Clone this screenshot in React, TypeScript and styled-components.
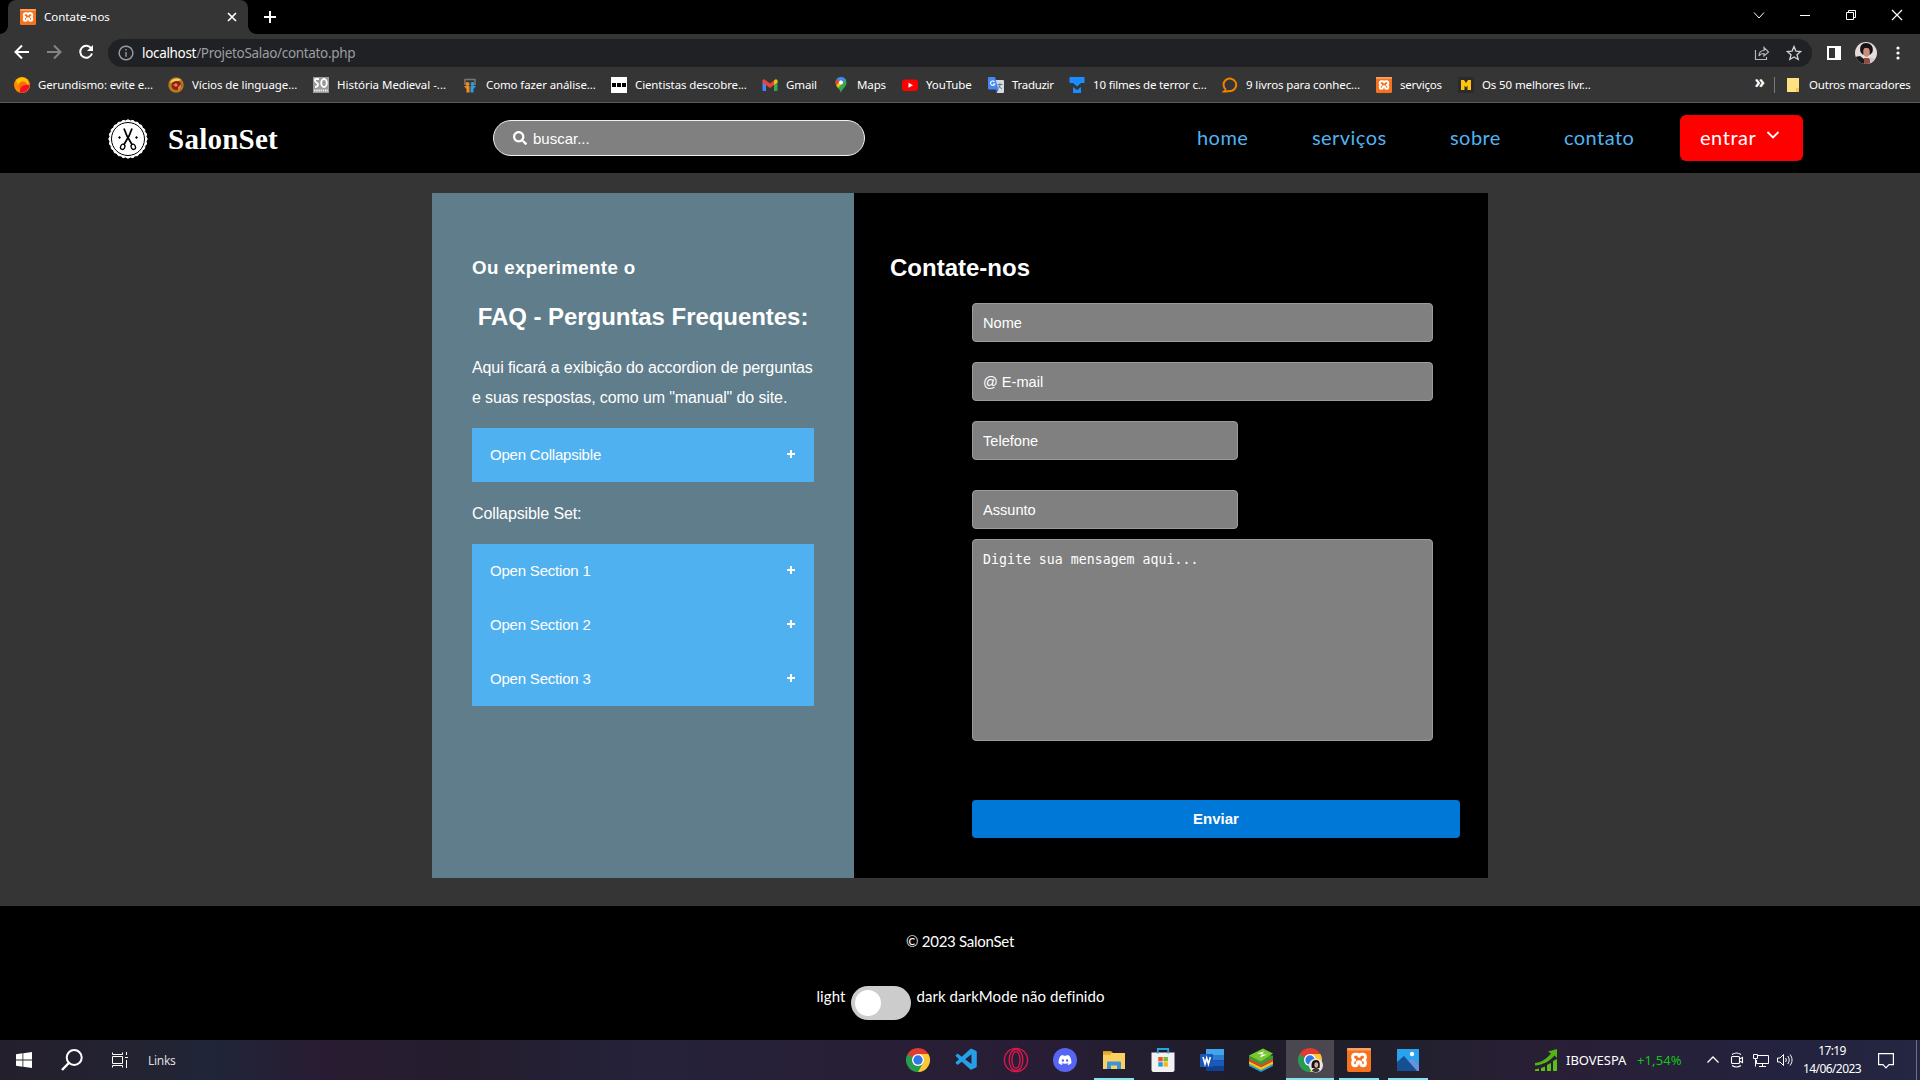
import React from "react";
import styled, { createGlobalStyle, css } from "styled-components";
import { FaDiscord, FaSearch } from "react-icons/fa";
import { VscVscode } from "react-icons/vsc";

const ui = `"Noto Sans", "Open Sans", sans-serif`;
const arial = `"Liberation Sans", Arial, sans-serif`;
const site = `Lato, "Open Sans", sans-serif`;

const GlobalStyle = createGlobalStyle`
  * { box-sizing: border-box; }
  body { margin: 0; background: #353535; overflow: hidden; }
  h1, h2, h3, p { margin: 0; }
  svg { display: block; flex: none; }
`;

const Screen = styled.div`
  width: 1920px;
  height: 1080px;
  display: flex;
  flex-direction: column;
  overflow: hidden;
  background: #353535;
  color: #fff;
  font-family: ${ui};
`;

/* ---------- browser chrome ---------- */

const TabStrip = styled.div`
  height: 34px;
  flex: none;
  background: #000;
  display: flex;
  align-items: center;
  padding-left: 8px;
`;
const Tab = styled.div`
  position: relative;
  width: 240px;
  height: 34px;
  border-radius: 8px 8px 0 0;
  background: #353535;
  display: flex;
  align-items: center;
  padding: 0 9px 0 12px;
  &::before,
  &::after {
    content: "";
    position: absolute;
    bottom: 0;
    width: 8px;
    height: 8px;
  }
  &::before {
    left: -8px;
    background: radial-gradient(circle at 0 0, #000 7.5px, #353535 8px);
  }
  &::after {
    right: -8px;
    background: radial-gradient(circle at 100% 0, #000 7.5px, #353535 8px);
  }
`;
const TabTitle = styled.span`
  margin-left: 8px;
  padding-bottom: 2px;
  flex: 1;
  font-size: 11.5px;
  letter-spacing: 0;
`;
const NewTab = styled.div`
  margin-left: 16px;
  flex: 1;
`;
const WindowButtons = styled.div`
  display: flex;
  align-items: center;
  gap: 30px;
  padding: 0 15px 5px 0;
`;

const Toolbar = styled.div`
  height: 34px;
  flex: none;
  display: flex;
  align-items: center;
  padding: 2px 10px 0 14px;
`;
const NavIcons = styled.div`
  display: flex;
  gap: 16px;
  width: 94px;
`;
const AddressBar = styled.div`
  width: 1704px;
  height: 28px;
  margin-top: 2px;
  border-radius: 14px;
  background: #202124;
  display: flex;
  align-items: center;
  padding: 0 10px 0 10px;
`;
const Url = styled.div`
  flex: 1;
  margin-left: 8px;
  padding-bottom: 1px;
  font-size: 13.5px;
  letter-spacing: -0.32px;
  color: #9a9da1;
  b {
    font-weight: 400;
    color: #fff;
  }
`;
const BarActions = styled.div`
  display: flex;
  gap: 16px;
`;
const ToolActions = styled.div`
  margin: 2px 0 0 14px;
  display: flex;
  align-items: center;
  gap: 13px;
  svg:last-child { margin-left: 3px; }
`;

const Bookmarks = styled.div`
  height: 35px;
  flex: none;
  display: flex;
  align-items: center;
  padding: 0 0 1px 14px;
  border-bottom: 1px solid #5b5c5e;
`;
const Bookmark = styled.div`
  display: flex;
  align-items: center;
  gap: 8px;
  margin-right: 16px;
`;
const BookmarkText = styled.span<{ $w: number; $ls?: number }>`
  width: ${(p) => p.$w}px;
  padding-bottom: 1px;
  white-space: nowrap;
  font-size: 11.5px;
  letter-spacing: ${(p) => p.$ls ?? -0.12}px;
`;
const More = styled.span`
  margin: 0 9px 0 auto;
  font-size: 17px;
  font-weight: 700;
  line-height: 16px;
  padding-bottom: 5px;
`;
const Separator = styled.span`
  width: 1px;
  height: 16px;
  background: #77797b;
  margin-right: 11px;
`;

/* ---------- page header ---------- */

const Header = styled.header`
  height: 70px;
  flex: none;
  background: #000;
  display: flex;
  align-items: center;
  padding: 0 117px 0 108px;
`;
const Brand = styled.div`
  display: flex;
  align-items: center;
  gap: 20px;
  width: 385px;
  padding-top: 1px;
  font-family: "Liberation Serif", "Times New Roman", serif;
  font-size: 29px;
  letter-spacing: 0.25px;
  font-weight: 700;
  line-height: 34px;
`;
const Search = styled.div`
  width: 372px;
  height: 36px;
  border: 1px solid #f0f0f0;
  border-radius: 18px;
  background: #808080;
  display: flex;
  align-items: center;
  gap: 6px;
  padding-left: 19px;
  font-family: ${arial};
  font-size: 15px;
`;
const Menu = styled.nav`
  flex: 1;
  display: flex;
  align-items: center;
  justify-content: flex-end;
  gap: 64px;
  padding: 0 45px 2px 0;
`;
const MenuLink = styled.a<{ $w: number }>`
  width: ${(p) => p.$w}px;
  white-space: nowrap;
  font-family: ${site};
  font-size: 20px;
  line-height: 26px;
  letter-spacing: 0.45px;
  color: #52b3f1;
`;
const Enter = styled.button`
  width: 123px;
  height: 46px;
  border: 0;
  border-radius: 6px;
  background: #f00;
  color: #fff;
  display: flex;
  align-items: center;
  gap: 10px;
  padding: 0 0 2px 20px;
  font-family: ${site};
  font-size: 20px;
  letter-spacing: 0.55px;
  svg { margin-bottom: 4px; }
`;

/* ---------- contact panel ---------- */

const Main = styled.main`
  flex: none;
  height: 733px;
  padding: 20px 432px 0;
`;
const Panel = styled.section`
  width: 1056px;
  height: 685px;
  display: flex;
`;
const Faq = styled.div`
  width: 422px;
  padding: 60px 40px 0;
  background: #607d8b;
  font-family: ${arial};
`;
const FaqLead = styled.h3`
  font-size: 18.72px;
  line-height: 30px;
  letter-spacing: 0.34px;
`;
const FaqTitle = styled.h2`
  margin-top: 19px;
  font-size: 24px;
  line-height: 30px;
  letter-spacing: -0.05px;
  text-align: center;
  white-space: nowrap;
`;
const FaqText = styled.p<{ $top: number }>`
  margin-top: ${(p) => p.$top}px;
  font-size: 16px;
  line-height: 30px;
  letter-spacing: -0.11px;
  white-space: nowrap;
`;
const Accordion = styled.div<{ $top: number }>`
  margin-top: ${(p) => p.$top}px;
  background: #50b1f0;
`;
const AccordionRow = styled.button`
  width: 100%;
  height: 54px;
  border: 0;
  padding: 0 19px 2px 18px;
  background: transparent;
  color: #fff;
  display: flex;
  align-items: center;
  justify-content: space-between;
  font-family: ${arial};
  font-size: 15px;
  letter-spacing: -0.2px;
`;

const Contact = styled.div`
  width: 634px;
  padding: 60px 28px 0 36px;
  background: #000;
  font-family: ${arial};
`;
const ContactTitle = styled.h2`
  font-size: 24px;
  line-height: 30px;
`;
const Form = styled.form`
  margin-top: 20px;
  padding-left: 82px;
  display: flex;
  flex-direction: column;
`;
const fieldStyle = css`
  display: block;
  border: 1px solid #9c9c9c;
  border-radius: 4px;
  background: #808080;
  color: #fff;
  outline: none;
  &::placeholder {
    color: #fff;
    opacity: 1;
  }
`;
const Field = styled.input<{ $w: number; $gap: number }>`
  ${fieldStyle}
  width: ${(p) => p.$w}px;
  height: 39px;
  margin: 0 0 ${(p) => p.$gap}px;
  padding: 0 10px;
  font: 14.6px ${arial};
`;
const Message = styled.textarea`
  ${fieldStyle}
  width: 461px;
  height: 202px;
  margin: 0 0 59px;
  padding: 12px 10px;
  resize: none;
  font: 13.25px/16px "DejaVu Sans Mono", monospace;
`;
const Submit = styled.button`
  width: 488px;
  height: 38px;
  border: 0;
  border-radius: 4px;
  padding: 0 0 2px;
  background: #0078d7;
  color: #fff;
  font: 700 15px ${arial};
`;

/* ---------- page footer ---------- */

const Footer = styled.footer`
  height: 134px;
  flex: none;
  background: #000;
  display: flex;
  flex-direction: column;
  align-items: center;
  padding-top: 25px;
  font-family: ${site};
  font-size: 15px;
  line-height: 20px;
`;
const Copyright = styled.p`
  letter-spacing: -0.27px;
`;
const ThemeRow = styled.div`
  margin-top: 35px;
  display: flex;
  gap: 6px;
`;
const ThemeText = styled.span<{ $w: number }>`
  width: ${(p) => p.$w}px;
  white-space: nowrap;
  letter-spacing: 0.07px;
`;
const Toggle = styled.span`
  width: 60px;
  height: 34px;
  padding: 4px;
  border-radius: 17px;
  background: #ccc;
  &::before {
    content: "";
    display: block;
    width: 26px;
    height: 26px;
    border-radius: 50%;
    background: #fff;
  }
`;

/* ---------- desktop taskbar ---------- */

const Taskbar = styled.div`
  height: 40px;
  flex: none;
  display: flex;
  align-items: center;
  background: linear-gradient(90deg, #241f2d 0, #232331 7%, #202538 11%, #291c32 17%, #241d2e 24%, #25223a 34%, #281e35 48%, #271e35 55%, #1e1d29 66%, #22202f 74%, #291f35 80%, #272039 86%, #232340 94%, #252642 100%);
`;
const StartGroup = styled.div`
  width: 894px;
  padding-left: 16px;
  display: flex;
  align-items: center;
  font-size: 12px;
  letter-spacing: -0.3px;
  color: #ddd;
`;
const Slot = styled.span<{ $left: number }>`
  margin-left: ${(p) => p.$left}px;
`;
const Apps = styled.div`
  display: flex;
  gap: 1px;
`;
const AppButton = styled.div<{ $open?: boolean; $active?: boolean }>`
  width: 48px;
  height: 40px;
  display: flex;
  flex-direction: column;
  align-items: center;
  justify-content: center;
  position: relative;
  background: ${(p) => (p.$active ? "#4b4751" : "transparent")};
  &::after {
    content: "";
    display: ${(p) => (p.$open || p.$active ? "block" : "none")};
    position: absolute;
    bottom: 0;
    width: ${(p) => (p.$active ? 48 : 40)}px;
    height: 2px;
    background: #86e2ee;
  }
`;
const Tray = styled.div`
  margin-left: 103px;
  flex: 1;
  display: flex;
  align-items: center;
`;
const Stock = styled.span`
  margin-left: 9px;
  width: 71px;
  font-size: 13px;
  letter-spacing: -0.02px;
`;
const Change = styled.span`
  width: 68px;
  font-size: 13px;
  letter-spacing: 0.1px;
  color: #14c414;
`;
const TrayIcons = styled.div`
  width: 88px;
  display: flex;
  justify-content: space-between;
`;
const Clock = styled.div`
  width: 78px;
  text-align: center;
  font-size: 12px;
  line-height: 18px;
  letter-spacing: -0.6px;
`;
const Edge = styled.span`
  margin: 0 3px 0 auto;
  width: 1px;
  height: 40px;
  background: #6f7085;
`;

/* ---------- drawings ---------- */

const Xampp = ({ s }: { s: number }) => (
  <svg width={s} height={s} viewBox="0 0 24 24">
    <rect width="24" height="24" rx="2" fill="#f5731f" />
    <rect width="24" height="2.5" rx="1" fill="#f9a263" />
    <path
      d="M8 6.200h2.200c1 0 1.800.8 1.800 1.800s.8-1.800 1.800-1.800H16a2.300 2.300 0 0 1 2.300 2.300v1.200c0 1.200-.9 2.300-2 2.300 1.100 0 2 1.100 2 2.300v1.200a2.300 2.300 0 0 1-2.300 2.300 2.300 2.300 0 0 1-2.300-2.300c0-1.200-.7-1.800-1.700-1.800s-1.700.6-1.700 1.800a2.300 2.300 0 0 1-2.300 2.300 2.300 2.300 0 0 1-2.300-2.300v-1.200c0-1.200.9-2.300 2-2.300-1.100 0-2-1.100-2-2.300V8.500A2.300 2.300 0 0 1 8 6.200z"
      fill="none"
      stroke="#fff"
      strokeWidth="3"
      strokeLinejoin="round"
    />
  </svg>
);

const ChromeLogo = ({ face }: { face?: boolean }) => (
  <svg width="26" height="26" viewBox="0 0 26 26">
    <path d="M13 13 2.600 7A12 12 0 0 1 23.400 7z" fill="#e33b2e" />
    <path d="M13 13 23.400 7A12 12 0 0 1 13 25z" fill="#fcc934" />
    <path d="M13 13v12A12 12 0 0 1 2.600 7z" fill="#269d4e" />
    <path d="M13 7h10.400l-5.200 9z" fill="#fcc934" />
    <path d="M7.800 16 2.600 7 13 7z" fill="#e33b2e" />
    <path d="M18.200 16 13 25 7.800 16z" fill="#269d4e" />
    <path d="M2.600 7 7.800 16 9 11z" fill="#269d4e" />
    <circle cx="13" cy="13" r="6" fill="#fff" />
    <circle cx="13" cy="13" r="4.700" fill="#2f78ea" />
    {face && (
      <g>
        <circle cx="19" cy="18.500" r="7" fill="#e9e6e4" />
        <path d="M14.800 21c-1-5 .5-8 4.200-8s4.200 3.500 3.500 8z" fill="#17120f" />
        <ellipse cx="19.300" cy="18" rx="1.900" ry="2.800" fill="#e0ad9a" />
        <path d="M15 23.500c1-2 3-2.500 4-2.500s3 .5 3.500 2.500c-2 2-5.500 2-7.500 0z" fill="#3a3335" />
      </g>
    )}
  </svg>
);

const Logo = () => {
  const teeth = Array.from({ length: 48 }, (_, i) => {
    const a = (i * Math.PI) / 24;
    const r = i % 2 ? 18.2 : 19.3;
    return `${20 + r * Math.cos(a)},${20 + r * Math.sin(a)}`;
  }).join(" ");
  return (
    <svg width="40" height="40" viewBox="0 0 40 40">
      <polygon points={teeth} fill="#fff" stroke="#fff" strokeLinejoin="round" />
      <circle cx="20" cy="20" r="16.500" fill="none" stroke="#000" strokeWidth="1" />
      <g fill="none" stroke="#000" strokeWidth="1.300">
        <path d="M16 9.500 19 17l5 8.500M24 9.500 21 17l-5 8.500" strokeWidth="1.700" />
        <ellipse cx="14.700" cy="27.800" rx="2.100" ry="2.700" transform="rotate(25 14.700 27.800)" />
        <ellipse cx="25.300" cy="27.800" rx="2.100" ry="2.700" transform="rotate(-25 25.300 27.800)" />
      </g>
      <path d="M11.500 17l1.500 1.500-1.500 1.500-1.500-1.500zM28.500 17l1.500 1.500-1.500 1.500-1.500-1.500z" />
    </svg>
  );
};

const Stroke = ({
  d,
  w = 16,
  h,
  sw = 1,
  c = "#fff",
}: {
  d: string;
  w?: number;
  h?: number;
  sw?: number;
  c?: string;
}) => (
  <svg width={w} height={h ?? w} viewBox={`0 0 ${w} ${h ?? w}`} fill="none" stroke={c} strokeWidth={sw}>
    <path d={d} />
  </svg>
);

const Avatar = () => (
  <svg width="22" height="22" viewBox="0 0 22 22">
    <defs>
      <clipPath id="avatar">
        <circle cx="11" cy="11" r="11" />
      </clipPath>
    </defs>
    <g clipPath="url(#avatar)">
      <path fill="#e4dcda" d="M0 0h22v22H0z" />
      <path d="M5.500 10C4 4 7 1 11 1s8 3 6.500 9l-2 2.500h-8z" fill="#181113" />
      <ellipse cx="11.500" cy="10" rx="3.300" ry="4.700" fill="#c98d7d" />
      <path d="M7.500 8c1-3 6-3 8 0V5h-8z" fill="#181113" />
      <path d="M0 15l5-1 4 3v5H0z" fill="#1c1a1d" />
      <path d="M9 16h5l3 6H9z" fill="#8b4f43" />
      <path d="M15 15l5 2v5h-5z" fill="#cfcacb" />
    </g>
  </svg>
);

const b = (children: React.ReactNode) => (
  <svg width="16" height="16" viewBox="0 0 16 16">
    {children}
  </svg>
);

const bookmarks: { text: string; w: number; ls?: number; icon: React.ReactNode }[] = [
  {
    text: "Gerundismo: evite e...",
    w: 114,
    icon: b(
      <>
        <circle cx="8" cy="8" r="8" fill="#ff8a00" />
        <path d="M2 4a7 7 0 0 1 12 0l1 5-9 1z" fill="#ffc400" />
        <circle cx="9" cy="9" r="4.500" fill="#ff6a00" />
        <path d="M15.500 8A8 8 0 0 1 6 15.500C5 11 9 7 15.500 8z" fill="#f4102c" />
      </>
    ),
  },
  {
    text: "Vícios de linguage...",
    w: 105,
    ls: -0.08,
    icon: b(
      <>
        <circle cx="8" cy="8" r="7.700" fill="#b57a1e" />
        <path d="M2 6a7 7 0 0 1 11-3L7 5z" fill="#f4cf62" />
        <ellipse cx="8.500" cy="8.500" rx="5" ry="4.500" fill="#8d1f14" />
        <path d="M5 8l3-2 2 2-2 2zM10 10l3-3v4l-3 3z" fill="#e0803a" />
      </>
    ),
  },
  {
    text: "História Medieval -...",
    w: 109,
    ls: -0.03,
    icon: b(
      <>
        <path fill="#9b9b9b" d="M0 0h16v16H0z" />
        <path d="M6 2H3C1 2 2 5 4 6s1 4-2 4" stroke="#fff" strokeWidth="1.800" fill="none" />
        <ellipse cx="11" cy="6" rx="2.800" ry="4" stroke="#fff" strokeWidth="1.800" fill="none" />
        <path d="M1 13.500h14" stroke="#eee" strokeWidth="2" strokeDasharray="1.500 .7" />
      </>
    ),
  },
  {
    text: "Como fazer análise...",
    w: 109,
    icon: b(
      <>
        <path d="M3 8V2.500h10V8" stroke="#777" strokeWidth="1.500" fill="none" />
        <circle cx="5.500" cy="7" r="2" fill="#f38b1e" />
        <circle cx="10.500" cy="7" r="2" fill="#2a9fd8" />
        <path d="M2 9h5.500v6.500H4.500V12z" fill="#f38b1e" />
        <path d="M8.500 9H14l-2.500 3v3.500h-3z" fill="#2a9fd8" />
      </>
    ),
  },
  {
    text: "Cientistas descobre...",
    w: 111,
    icon: b(
      <>
        <path fill="#fff" d="M0 0h16v16H0z" />
        <path d="M1 6h4v4H1zM6 6h4v4H6zM11 6h4v4h-4z" />
      </>
    ),
  },
  {
    text: "Gmail",
    w: 31,
    icon: b(
      <>
        <path d="M.5 3.500 4 6v8H1.500a1 1 0 0 1-1-1z" fill="#4285f4" />
        <path d="M15.500 3.500 12 6v8h2.500a1 1 0 0 0 1-1z" fill="#34a853" />
        <path d="M12 3.500 14 2l1.500 1.500v2L12 8z" fill="#fbbc04" />
        <path d="M.5 3.500 2 2l6 4.500L12 3.500V8l-4 3L.5 5.500z" fill="#ea4335" />
      </>
    ),
  },
  {
    text: "Maps",
    w: 29,
    icon: b(
      <>
        <path d="M8 16C7.300 12 2.500 10 2.500 5.500a5.500 5.500 0 0 1 11 0C13.500 10 8.700 12 8 16z" fill="#34a853" />
        <path d="M3.300 8.300A5.500 5.500 0 0 1 3.900 2L8 5.500z" fill="#ea4335" />
        <path d="M3.900 2A5.500 5.500 0 0 1 13 3L8 6z" fill="#4285f4" />
        <path d="M3.300 8.300 8 3l1.500 3-4.500 5z" fill="#fbbc04" />
        <circle cx="8" cy="5.500" r="2" fill="#fff" />
      </>
    ),
  },
  {
    text: "YouTube",
    w: 46,
    icon: b(
      <>
        <rect y="2.500" width="16" height="11.500" rx="3" fill="#f00" />
        <path d="M6.500 5.700v5L11 8.200z" fill="#fff" />
      </>
    ),
  },
  {
    text: "Traduzir",
    w: 41,
    ls: -0.3,
    icon: b(
      <>
        <path fill="#d6dbe2" d="M6 3h9a1 1 0 0 1 1 1v11a1 1 0 0 1-1 1H9z" />
        <path d="M9.500 7.500h5M12 6v1.500c0 2-1 3.500-2 4M10.500 9l3.500 3" stroke="#607d8b" fill="none" />
        <path fill="#4688f1" d="M1 0h6l3.500 12.500H1a1 1 0 0 1-1-1V1a1 1 0 0 1 1-1z" />
        <path d="M6.500 4.800A2.200 2.200 0 1 0 6.800 7H5" stroke="#fff" strokeWidth="1.100" fill="none" />
        <path fill="#3a54b4" d="M7 12.500h3.500L8.500 16z" />
      </>
    ),
  },
  {
    text: "10 filmes de terror c...",
    w: 113,
    ls: -0.17,
    icon: b(<path d="M.5 0h15v6H12l-4 3.500L4 6H.5zM4 10l4 3 4-3v6H4z" fill="#1a8cff" />),
  },
  {
    text: "9 livros para conhec...",
    w: 114,
    icon: b(<path d="M4 12.800A6.300 6.300 0 1 1 9 14c-2-.3-4 .6-7 .6L4 12.800" stroke="#f08000" strokeWidth="2" fill="none" />),
  },
  { text: "serviços", w: 42, ls: -0.22, icon: <Xampp s={16} /> },
  {
    text: "Os 50 melhores livr...",
    w: 109,
    icon: b(
      <>
        <path fill="#2b2b2b" d="M0 0h16v16H0z" />
        <path d="M3 3h3l2 3 2-3h3v10h-3.500V8.500L8 10.500 6.500 8.500V13H3z" fill="#ffc20e" />
      </>
    ),
  },
];

const sections = ["Open Section 1", "Open Section 2", "Open Section 3"];

const Plus = () => <Stroke w={8} sw={2} d="M4 0v8M0 4h8" />;

const apps: { open?: boolean; active?: boolean; icon: React.ReactNode }[] = [
  { icon: <ChromeLogo /> },
  { icon: <VscVscode size={26} color="#25a0e8" /> },
  {
    icon: (
      <svg width="26" height="26" viewBox="0 0 26 26" fill="none" stroke="#d9184c" strokeWidth="1.400">
        <circle cx="13" cy="13" r="11.600" />
        <ellipse cx="13" cy="13" rx="6.800" ry="10.700" />
        <ellipse cx="13" cy="13" rx="4" ry="8.500" />
      </svg>
    ),
  },
  {
    icon: (
      <svg width="24" height="24" viewBox="0 0 24 24">
        <circle cx="12" cy="12" r="12" fill="#5865f2" />
        <FaDiscord x={5} y={5} size={14} color="#fff" />
      </svg>
    ),
  },
  {
    open: true,
    icon: (
      <svg width="24" height="24" viewBox="0 0 24 24">
        <path d="M1 3h8l2 2H1z" fill="#d9981c" />
        <path d="M1 5h22v16H1z" fill="#fbd062" />
        <path d="M1 4.500h9L8.500 7H1z" fill="#eab038" />
        <path d="M5 21v-6.500a1 1 0 0 1 1-1h12a1 1 0 0 1 1 1V21h-4v-3.500H9V21z" fill="#3a94d8" />
      </svg>
    ),
  },
  {
    icon: (
      <svg width="24" height="26" viewBox="0 0 24 26">
        <path d="M.5 5.500h23V23a2 2 0 0 1-2 2h-19a2 2 0 0 1-2-2z" fill="#f1f1f1" />
        <path d="M6.800 6.500V2h10.400v4.500" fill="none" stroke="#23a5e0" strokeWidth="1.800" />
        <path d="M7.300 10h4.400v4.400H7.300z" fill="#f04e23" />
        <path d="M12.500 10h4.400v4.400h-4.400z" fill="#7db92c" />
        <path d="M7.300 15.200h4.400v4.400H7.300z" fill="#189fdc" />
        <path d="M12.500 15.200h4.400v4.400h-4.400z" fill="#fab515" />
      </svg>
    ),
  },
  {
    icon: (
      <svg width="24" height="24" viewBox="0 0 24 24">
        <path d="M6 1h18v6H6z" fill="#41a5ee" />
        <path d="M6 7h18v5.500H6z" fill="#2b7cd3" />
        <path d="M6 12.500h18V18H6z" fill="#185abd" />
        <path d="M6 18h18v5H6z" fill="#123f8c" />
        <path d="M0 6h13v13H0z" fill="#1a56b8" />
        <path d="M3 9l2 7 1.700-6 1.700 6L10.300 9" fill="none" stroke="#fff" strokeWidth="1.600" />
      </svg>
    ),
  },
  {
    icon: (
      <svg width="24" height="24" viewBox="0 0 24 24">
        <path d="M0 16l12 5 12-5v2l-12 6-12-6z" fill="#1f9bd7" />
        <path d="M0 13l12 6 12-6v3l-12 6-12-6z" fill="#f4c413" />
        <path d="M0 10l12 6 12-6v3l-12 6-12-6z" fill="#e8402e" />
        <path d="M0 7.500v3L12 17l12-6.500v-3z" fill="#3f9b2f" />
        <path d="M0 7.500 14 .5l10 5-12 8z" fill="#78c831" />
        <path d="M8 5.500l7-2-2 3h5l-7 3 2-3.500z" fill="#fff" />
      </svg>
    ),
  },
  { active: true, icon: <ChromeLogo face /> },
  { open: true, icon: <Xampp s={24} /> },
  {
    open: true,
    icon: (
      <svg width="22" height="22" viewBox="0 0 22 22">
        <path fill="#2aa3ef" d="M0 0h22v22H0z" />
        <path d="M10 14l5-4.500 7 7V22H10z" fill="#6f8fd8" />
        <path d="M0 13l7-6 13 15H0z" fill="#154f94" />
        <circle cx="15" cy="5" r="2.200" fill="#fff" />
      </svg>
    ),
  },
];

export default function App() {
  return (
    <Screen>
      <GlobalStyle />
      <TabStrip>
        <Tab>
          <Xampp s={16} />
          <TabTitle>Contate-nos</TabTitle>
          <Stroke w={14} sw={1.7} d="M3 3l8 8M11 3l-8 8" />
        </Tab>
        <NewTab>
          <Stroke w={12} sw={2} d="M6 0v12M0 6h12" />
        </NewTab>
        <WindowButtons>
          <Stroke d="M3 5.500l5 5.500 5-5.500" />
          <Stroke d="M3 8.500h10" />
          <Stroke d="M3.500 5.500h7v7h-7zM5.500 5.500v-2h7v7h-2" />
          <Stroke d="M3 3l10 10M13 3L3 13" sw={1.2} />
        </WindowButtons>
      </TabStrip>
      <Toolbar>
        <NavIcons>
          <Stroke sw={2} d="M15 8H2M8 1.500L1.500 8 8 14.500" />
          <Stroke sw={2} c="#858585" d="M1 8h13M8 1.500L14.500 8 8 14.500" />
          <svg width="16" height="16" viewBox="0 0 16 16">
            <path d="M13.300 4.500A6 6 0 1 0 14 9.500" fill="none" stroke="#fff" strokeWidth="2" />
            <path d="M15 1v6H9z" fill="#fff" />
          </svg>
        </NavIcons>
        <AddressBar>
          <Stroke c="#9a9da1" sw={1.4} d="M8 1.200a6.800 6.800 0 1 0 .01 0M8 7v4.800M8 4v1.600" />
          <Url>
            <b>localhost</b>/ProjetoSalao/contato.php
          </Url>
          <BarActions>
            <Stroke c="#b5b7ba" sw={1.2} d="M1.500 5v9.500h11V12M5 11c0-4 2-5.500 5-5.500V2.500L14.500 7 10 11V8.500c-2.500 0-4 .5-5 2.500z" />
            <Stroke c="#d0d1d3" sw={1.3} d="M8 1.500l1.900 4.600 4.800.4-3.700 3.200 1.200 4.800L8 12l-4.200 2.500L5 9.700 1.300 6.500l4.800-.4z" />
          </BarActions>
        </AddressBar>
        <ToolActions>
          <svg width="16" height="16" viewBox="0 0 16 16">
            <path d="M1 1h14v14H1zM3 3v10h6V3z" fill="#fff" fillRule="evenodd" />
          </svg>
          <Avatar />
          <svg width="16" height="16" viewBox="0 0 16 16" fill="#fff">
            <circle cx="5" cy="3" r="1.600" />
            <circle cx="5" cy="8" r="1.600" />
            <circle cx="5" cy="13" r="1.600" />
          </svg>
        </ToolActions>
      </Toolbar>
      <Bookmarks>
        {bookmarks.map((m) => (
          <Bookmark key={m.text}>
            {m.icon}
            <BookmarkText $w={m.w} $ls={m.ls}>
              {m.text}
            </BookmarkText>
          </Bookmark>
        ))}
        <More>»</More>
        <Separator />
        <Bookmark>
          <svg width="15" height="16" viewBox="0 0 15 16">
            <path d="M1 1h12v12l-2 2H1z" fill="#ffe082" />
            <path d="M10 11h3v4h-3z" fill="#f6c945" />
          </svg>
          <BookmarkText $w={95} $ls={-0.17}>
            Outros marcadores
          </BookmarkText>
        </Bookmark>
      </Bookmarks>

      <Header>
        <Brand>
          <Logo />
          SalonSet
        </Brand>
        <Search>
          <FaSearch size={14} />
          buscar...
        </Search>
        <Menu>
          <MenuLink $w={51}>home</MenuLink>
          <MenuLink $w={74}>serviços</MenuLink>
          <MenuLink $w={50}>sobre</MenuLink>
          <MenuLink $w={71}>contato</MenuLink>
        </Menu>
        <Enter>
          entrar
          <Stroke w={14} h={10} sw={1.8} d="M1.500 2L7 7.500 12.500 2" />
        </Enter>
      </Header>

      <Main>
        <Panel>
          <Faq>
            <FaqLead>Ou experimente o</FaqLead>
            <FaqTitle>FAQ - Perguntas Frequentes:</FaqTitle>
            <FaqText $top={21}>
              Aqui ficará a exibição do accordion de perguntas
              <br />e suas respostas, como um "manual" do site.
            </FaqText>
            <Accordion $top={15}>
              <AccordionRow>
                Open Collapsible
                <Plus />
              </AccordionRow>
            </Accordion>
            <FaqText $top={17}>Collapsible Set:</FaqText>
            <Accordion $top={15}>
              {sections.map((s) => (
                <AccordionRow key={s}>
                  {s}
                  <Plus />
                </AccordionRow>
              ))}
            </Accordion>
          </Faq>
          <Contact>
            <ContactTitle>Contate-nos</ContactTitle>
            <Form>
              <Field $w={461} $gap={20} placeholder="Nome" />
              <Field $w={461} $gap={20} placeholder="@ E-mail" />
              <Field $w={266} $gap={30} placeholder="Telefone" />
              <Field $w={266} $gap={10} placeholder="Assunto" />
              <Message placeholder="Digite sua mensagem aqui..." />
              <Submit type="button">Enviar</Submit>
            </Form>
          </Contact>
        </Panel>
      </Main>

      <Footer>
        <Copyright>© 2023 SalonSet</Copyright>
        <ThemeRow>
          <ThemeText $w={28}>light</ThemeText>
          <Toggle />
          <ThemeText $w={187}>dark darkMode não definido</ThemeText>
        </ThemeRow>
      </Footer>

      <Taskbar>
        <StartGroup>
          <svg width="16" height="16" viewBox="0 0 16 16" fill="#fff">
            <path d="M0 2.300 6.500 1.300v6.200H0zM7.300 1.200 16 0v7.500H7.300zM0 8.400h6.500v6.300L0 13.800zM7.300 8.400H16V16l-8.700-1.200z" />
          </svg>
          <Slot $left={29}>
            <svg width="22" height="22" viewBox="0 0 22 22" fill="none" stroke="#fff" strokeWidth="2">
              <circle cx="13.200" cy="8.500" r="7.500" />
              <path d="M7.800 14L1 21" strokeWidth="2.500" />
            </svg>
          </Slot>
          <Slot $left={29}>
            <Stroke d="M.5.500v2h10v-2M.5 15.500v-2h10v2M.5 4.500h10v7H.5zM14.500 0v3M14.500 8v8M13 5.500h3" />
          </Slot>
          <Slot $left={20}>Links</Slot>
        </StartGroup>
        <Apps>
          {apps.map((a, i) => (
            <AppButton key={i} $open={a.open} $active={a.active}>
              {a.icon}
            </AppButton>
          ))}
        </Apps>
        <Tray>
          <svg width="22" height="22" viewBox="0 0 22 22">
            <path d="M0 22v-1.500l4-1V22zM6 22v-3l4-1.500V22zM12 22v-6l4-2v8zM18 22V12l4-2v12z" fill="#5bbf16" />
            <path d="M0 14C8 13 12 9 16 4.500L13 2.500 22 0v9l-2.500-2.500C15 12 8 16 0 16.500z" fill="#52b512" />
          </svg>
          <Stock>IBOVESPA</Stock>
          <Change>+1,54%</Change>
          <TrayIcons>
            <Stroke sw={1.3} d="M2.500 10.500L8 5l5.500 5.500" />
            <Stroke sw={1.1} d="M3 2.500c3-2 6-2 9 0M3 13.500c3 2 6 2 9 0M2.500 5.500a1 1 0 0 1 1-1h6a1 1 0 0 1 1 1v5a1 1 0 0 1-1 1h-6a1 1 0 0 1-1-1zM10.500 7l3-1.500v5l-3-1.500" />
            <Stroke d="M5 3.500h10.500v8H3.500V8M9.500 11.500v3M6 14.500h7M.5 2.500h4v4h-4zM2.500 6.500v8" />
            <Stroke d="M.5 6h2.500l3.500-3.500v11L3 10H.5zM8.500 6c1 1.300 1 2.700 0 4M10.700 4c2 2.700 2 5.300 0 8M13 2.500c2.700 3.500 2.700 7.500 0 11" />
          </TrayIcons>
          <Clock>
            17:19
            <br />
            14/06/2023
          </Clock>
          <Slot $left={7}>
            <Stroke sw={1.2} h={18} d="M.6 2.600h14.800v11H11L8 16.800l-3-3.200H.6z" />
          </Slot>
          <Edge />
        </Tray>
      </Taskbar>
    </Screen>
  );
}
